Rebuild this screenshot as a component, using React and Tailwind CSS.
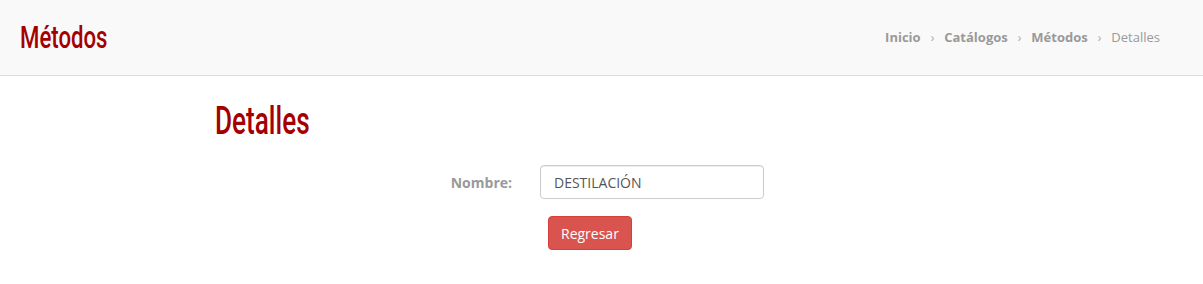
export default function App() {
  const crumbs = ["Inicio", "Catálogos", "Métodos"];
  return (
    <div className="min-h-[284px] w-full bg-white font-['Open_Sans',sans-serif] text-[13px] text-[#555]">
      <header className="flex h-[76px] items-center justify-between border-b border-[#dcdcdc] bg-[#f9f9f9] pl-5 pr-[43px]">
        <h1 className="origin-left scale-x-[0.715] font-['Roboto',sans-serif] text-[31px] font-medium leading-none text-[#a30000]">
          Métodos
        </h1>
        <nav className="flex items-center text-[13px] text-[#999]">
          {crumbs.map((c) => (
            <span key={c} className="flex items-center">
              <span className="font-bold text-[#999]">{c}</span>
              <span className="mx-[10px] text-[12px] text-[#aaa]">›</span>
            </span>
          ))}
          <span className="text-[#999]">Detalles</span>
        </nav>
      </header>

      <main className="pl-[215px] pt-[25px]">
        <h2 className="origin-left scale-x-[0.67] font-['Roboto',sans-serif] text-[39px] font-medium leading-[40px] text-[#a30000]">
          Detalles
        </h2>
      </main>

      <form className="mt-[24px]">
        <div className="flex items-center">
          <label className="w-[512px] text-right text-[14px] font-bold text-[#999]">Nombre:</label>
          <input
            readOnly
            value="DESTILACIÓN"
            className="ml-[28px] h-[34px] w-[224px] rounded-[4px] border border-[#ccc] bg-white px-[13px] text-[14px] text-[#555] shadow-[inset_0_1px_1px_rgba(0,0,0,0.075)] outline-none"
          />
        </div>
        <div className="mt-[17px] pl-[548px]">
          <button
            type="button"
            className="h-[34px] rounded-[4px] border border-[#d43f3a] bg-[#d9534f] px-[12px] text-[14px] text-white"
          >
            Regresar
          </button>
        </div>
      </form>
    </div>
  );
}
